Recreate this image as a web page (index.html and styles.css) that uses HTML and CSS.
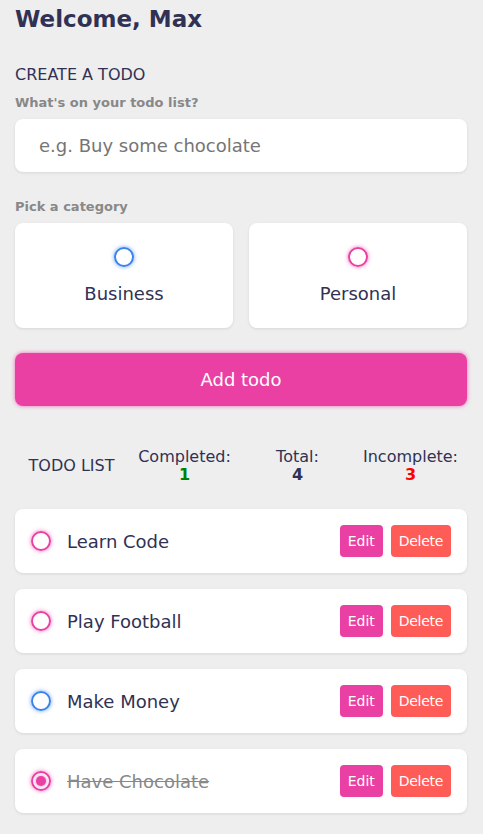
FILE: index.html
```html
<!DOCTYPE html>
<html lang="en">
<head>
<meta charset="utf-8">
<title>Todo</title>
<link rel="stylesheet" href="styles.css">
</head>
<body>
<main class="app">
  <section class="greeting">
    <h1 class="title">Welcome, Max</h1>
  </section>

  <section class="create-todo">
    <h3 class="section-title">CREATE A TODO</h3>
    <h4 class="label">What's on your todo list?</h4>
    <input class="todo-input" type="text" placeholder="e.g. Buy some chocolate">

    <h4 class="label">Pick a category</h4>
    <div class="options">
      <label class="option">
        <span class="bubble business"></span>
        <span class="option-name">Business</span>
      </label>
      <label class="option">
        <span class="bubble personal"></span>
        <span class="option-name">Personal</span>
      </label>
    </div>

    <button class="add-btn" type="button">Add todo</button>
  </section>

  <section class="todo-list">
    <div class="stats">
      <div class="stat stat-title">TODO LIST</div>
      <div class="stat">Completed:<b class="num green">1</b></div>
      <div class="stat">Total:<b class="num dark">4</b></div>
      <div class="stat">Incomplete:<b class="num red">3</b></div>
    </div>

    <div class="list">
      <div class="todo-item">
        <span class="bubble personal"></span>
        <span class="todo-content">Learn Code</span>
        <div class="actions">
          <button class="btn edit" type="button">Edit</button>
          <button class="btn delete" type="button">Delete</button>
        </div>
      </div>
      <div class="todo-item">
        <span class="bubble personal"></span>
        <span class="todo-content">Play Football</span>
        <div class="actions">
          <button class="btn edit" type="button">Edit</button>
          <button class="btn delete" type="button">Delete</button>
        </div>
      </div>
      <div class="todo-item">
        <span class="bubble business"></span>
        <span class="todo-content">Make Money</span>
        <div class="actions">
          <button class="btn edit" type="button">Edit</button>
          <button class="btn delete" type="button">Delete</button>
        </div>
      </div>
      <div class="todo-item done">
        <span class="bubble personal checked"></span>
        <span class="todo-content">Have Chocolate</span>
        <div class="actions">
          <button class="btn edit" type="button">Edit</button>
          <button class="btn delete" type="button">Delete</button>
        </div>
      </div>
    </div>
  </section>
</main>
</body>
</html>
```

FILE: styles.css
```css
:root {
  --primary: #ea40a4;
  --business: #3a82ee;
  --light: #eeeeee;
  --grey: #888888;
  --dark: #313154;
  --danger: #ff5b57;
  --shadow: 0 1px 3px rgba(0, 0, 0, 0.1);
  --business-glow: 0 0 4px rgba(58, 130, 238, 0.75);
  --personal-glow: 0 0 4px rgba(234, 64, 164, 0.75);
}

* {
  margin: 0;
  padding: 0;
  box-sizing: border-box;
  font-family: "DejaVu Sans", sans-serif;
}

html, body {
  background: var(--light);
  color: var(--dark);
}

.app {
  padding: 5px 16px 0 15px;
}

.title {
  font-size: 23px;
  line-height: 28px;
  font-weight: 700;
  color: var(--dark);
  margin-bottom: 32px;
}

.section-title {
  font-size: 16px;
  line-height: 20px;
  font-weight: 400;
  color: var(--dark);
  margin-bottom: 9px;
}

.label {
  font-size: 13px;
  line-height: 17px;
  font-weight: 700;
  color: var(--grey);
  margin-bottom: 8px;
}

.todo-input {
  display: block;
  width: 100%;
  border: none;
  outline: none;
  font-size: 18px;
  line-height: 21px;
  height: 53px;
  padding: 16px 24px;
  color: var(--dark);
  background: #fff;
  border-radius: 8px;
  box-shadow: var(--shadow);
  margin-bottom: 26px;
}

.todo-input::placeholder {
  color: #757575;
}

.options {
  display: grid;
  grid-template-columns: 1fr 1fr;
  gap: 16px;
  margin-bottom: 25px;
}

.option {
  display: flex;
  flex-direction: column;
  align-items: center;
  background: #fff;
  padding: 24px;
  border-radius: 8px;
  box-shadow: var(--shadow);
}

.option-name {
  margin-top: 16px;
  font-size: 18px;
  line-height: 21px;
  color: var(--dark);
}

.bubble {
  display: flex;
  align-items: center;
  justify-content: center;
  flex: none;
  width: 20px;
  height: 20px;
  border-radius: 50%;
  border: 2px solid var(--business);
  box-shadow: var(--business-glow);
}

.bubble.personal {
  border-color: var(--primary);
  box-shadow: var(--personal-glow);
}

.bubble.checked::after {
  content: "";
  display: block;
  width: 10px;
  height: 10px;
  border-radius: 50%;
  background: var(--primary);
  box-shadow: var(--personal-glow);
}

.add-btn {
  display: block;
  width: 100%;
  height: 53px;
  border: none;
  font-size: 18px;
  line-height: 21px;
  color: #fff;
  background: var(--primary);
  border-radius: 8px;
  box-shadow: var(--personal-glow);
  margin-bottom: 42px;
}

.stats {
  display: grid;
  grid-template-columns: repeat(4, 1fr);
  align-items: center;
  text-align: center;
  font-size: 16px;
  line-height: 18px;
  color: var(--dark);
}

.stat {
  display: flex;
  flex-direction: column;
  align-items: center;
}

.num {
  font-weight: 700;
}

.green { color: #008000; }
.dark { color: var(--dark); }
.red { color: #ff0000; }

.list {
  margin-top: 25px;
}

.todo-item {
  display: flex;
  align-items: center;
  background: #fff;
  padding: 16px;
  border-radius: 8px;
  box-shadow: var(--shadow);
  margin-bottom: 16px;
}

.todo-item .bubble {
  margin-right: 16px;
}

.todo-content {
  flex: 1 1 0%;
  font-size: 18px;
  line-height: 21px;
  color: var(--dark);
}

.todo-item.done .todo-content {
  text-decoration: line-through;
  color: var(--grey);
}

.actions {
  display: flex;
  align-items: center;
  gap: 8px;
}

.btn {
  display: block;
  border: none;
  padding: 8px;
  border-radius: 4px;
  font-size: 14px;
  line-height: 16px;
  color: #fff;
}

.btn.edit { background: var(--primary); }
.btn.delete {
  background: var(--danger);
  letter-spacing: -0.3px;
}
```
